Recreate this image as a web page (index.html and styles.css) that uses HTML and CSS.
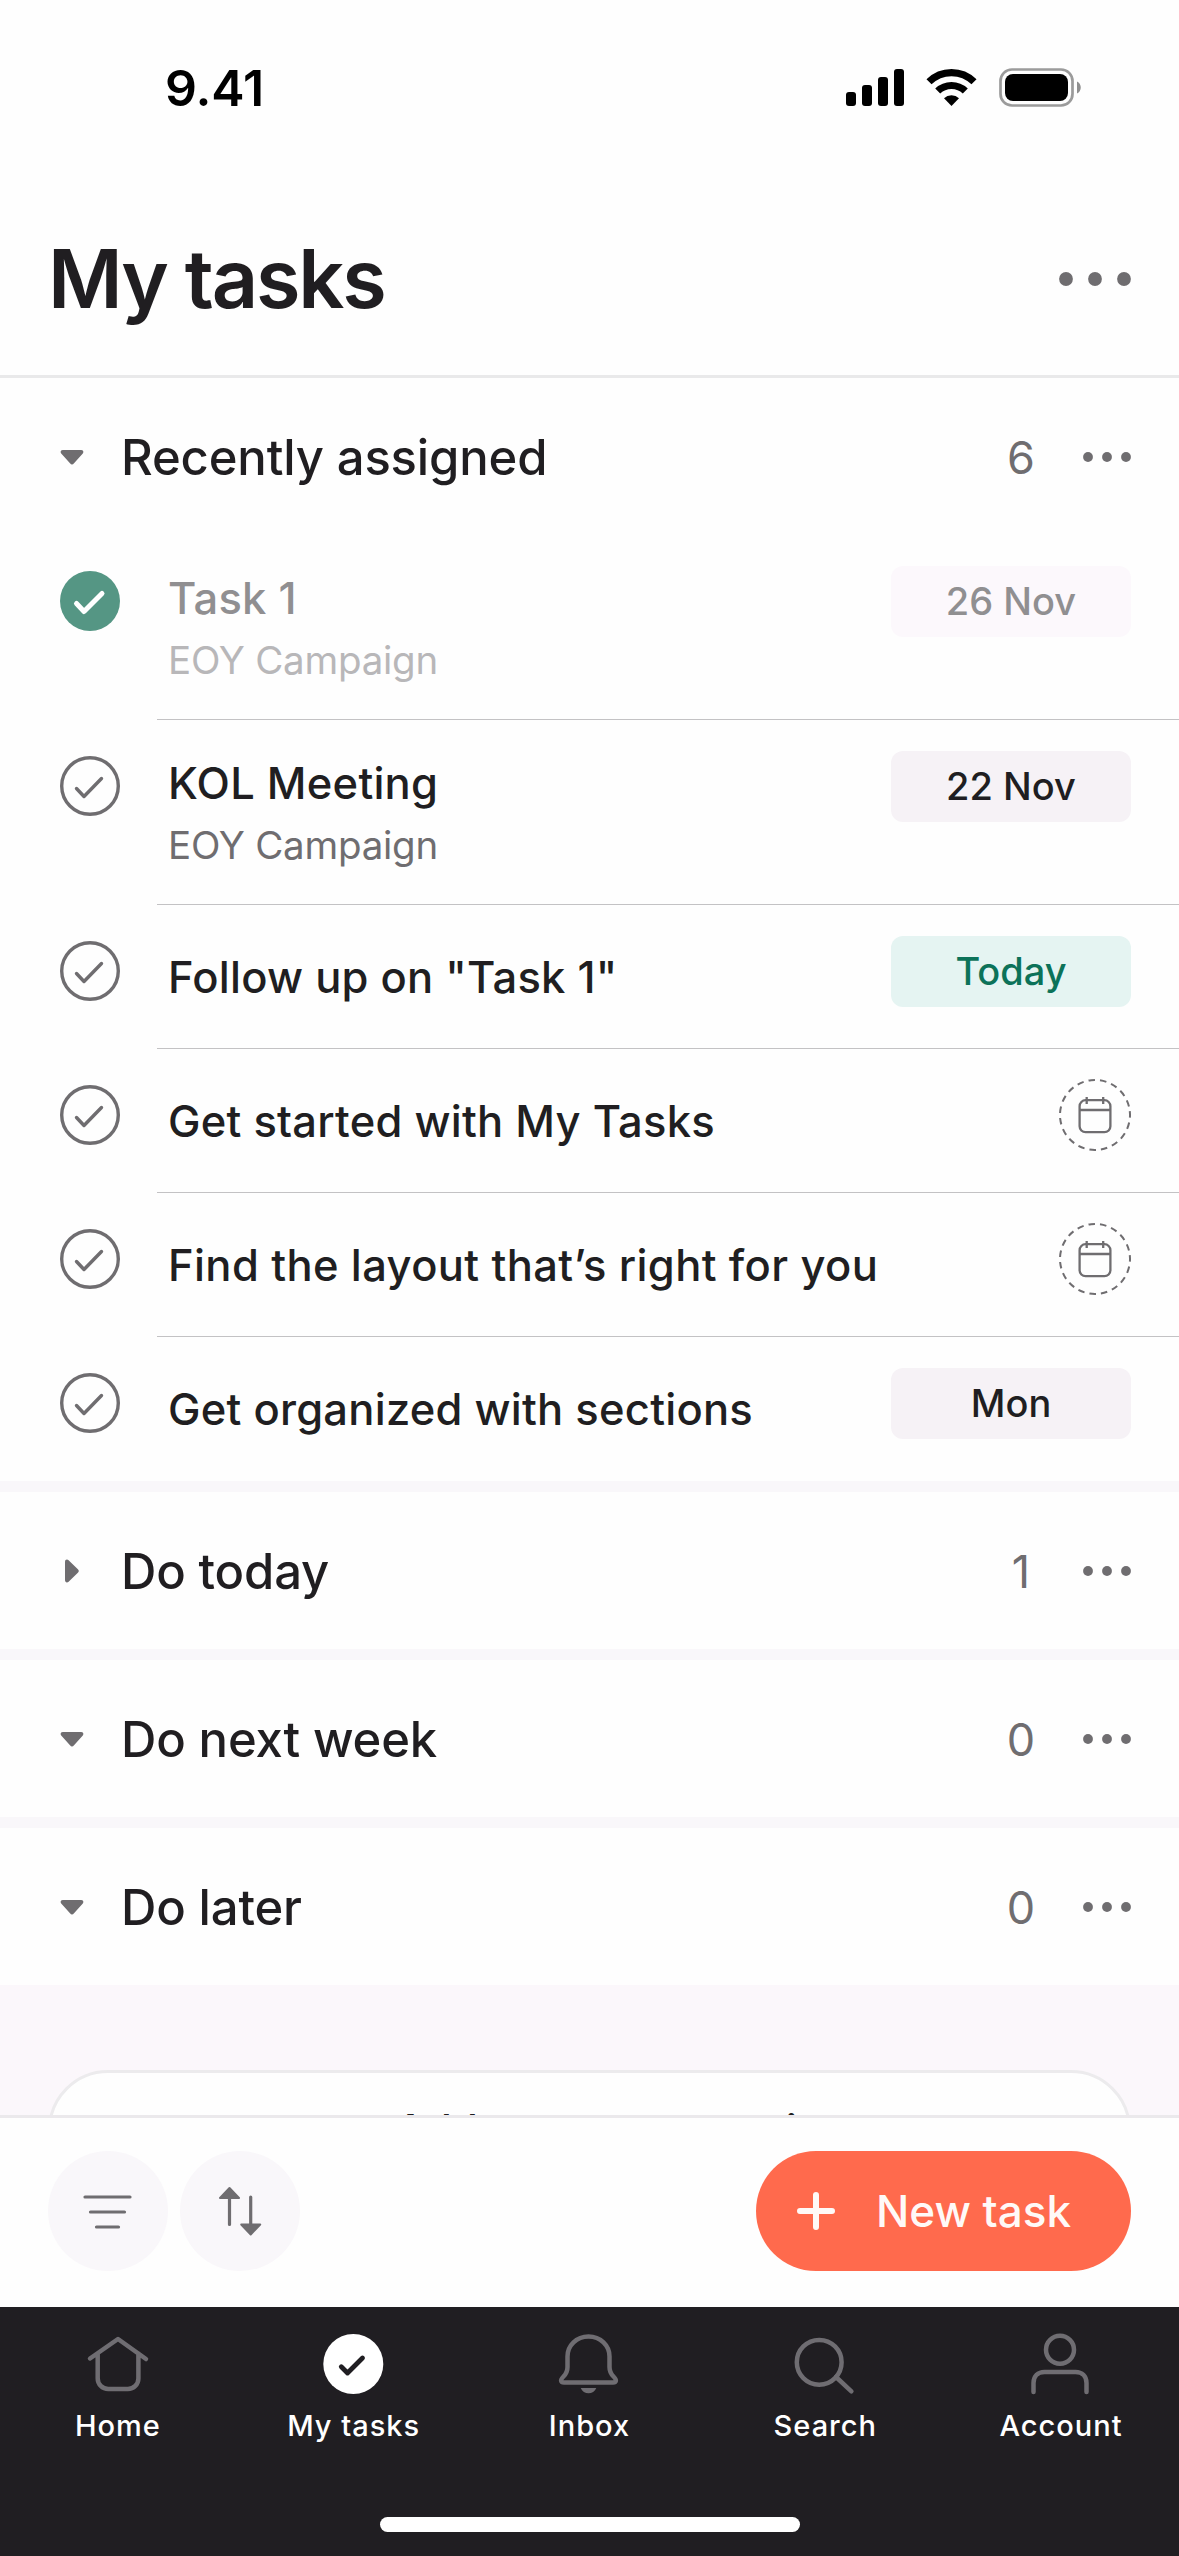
FILE: index.html
```html
<!DOCTYPE html>
<html lang="en">
<head>
<meta charset="utf-8">
<title>My tasks</title>
<link rel="stylesheet" href="styles.css">
</head>
<body>
<svg class="sprite" aria-hidden="true">
  <symbol id="check" viewBox="0 0 60 60">
    <circle cx="30" cy="30" r="28.300" fill="none" stroke="currentColor" stroke-width="3.400"/>
    <path d="M16.500 32.500 L24 40.500 L41.500 22.500" fill="none" stroke="currentColor" stroke-width="3.400" stroke-linecap="round" stroke-linejoin="round"/>
  </symbol>
  <symbol id="check-done" viewBox="0 0 60 60">
    <circle cx="30" cy="30" r="30" fill="#559684"/>
    <path d="M16.500 32.500 L24 40.500 L42 22.500" fill="none" stroke="#fff" stroke-width="5" stroke-linecap="round" stroke-linejoin="round"/>
  </symbol>
  <symbol id="dots" viewBox="0 0 48 10">
    <circle cx="5" cy="5" r="4.900"/><circle cx="24" cy="5" r="4.900"/><circle cx="43" cy="5" r="4.900"/>
  </symbol>
  <symbol id="caret-down" viewBox="0 0 24 24">
    <path d="M3 5h18c2.400 0 3 2 1.800 3.600L14 18.200c-1.300 1.600-2.700 1.600-4 0L1.200 8.600C0 7 .6 5 3 5z"/>
  </symbol>
  <symbol id="caret-right" viewBox="0 0 24 24">
    <path d="M5 3v18c0 2.400 2 3 3.600 1.800L17.600 14c1.600-1.300 1.600-2.700 0-4L8.600 1.200C7 0 5 .6 5 3z"/>
  </symbol>
  <symbol id="calendar" viewBox="0 0 72 72">
    <circle cx="36" cy="36" r="35" fill="none" stroke="currentColor" stroke-width="2" stroke-dasharray="6.540 5.034" transform="rotate(-6.400 36 36)"/>
    <g fill="none" stroke="currentColor" stroke-width="2.300">
      <rect x="20.600" y="21.200" width="30.800" height="32" rx="6"/>
      <path d="M20.600 31h30.800M27.700 18v7M44.200 18v7"/>
    </g>
  </symbol>
</svg>

<div class="screen">
  <div class="status">
    <span class="status-time">9.41</span>
    <svg class="status-icons" width="236" height="40" viewBox="0 0 236 40">
      <rect x="0" y="24" width="10" height="14" rx="3"/>
      <rect x="16" y="17" width="10" height="21" rx="3"/>
      <rect x="32" y="9" width="10" height="29" rx="3"/>
      <rect x="48" y="1" width="10" height="37" rx="3"/>
      <g fill="none" stroke="#000" stroke-width="7.200">
        <path d="M83 13.800 A32 32 0 0 1 128 13.800"/>
        <path d="M91.700 23 A20 20 0 0 1 119.300 23"/>
      </g>
      <path d="M98 30.300 A11 11 0 0 1 113 30.300 L105.500 38z"/>
      <rect x="154.500" y="1.500" width="72" height="36" rx="11.500" fill="none" stroke="#9b9b9b" stroke-width="2.700"/>
      <rect x="159" y="6" width="63" height="27" rx="8"/>
      <path d="M231 13.500c5 2 5 10 0 12z" fill="#8f8f8f"/>
    </svg>
  </div>

  <header class="header">
    <h1 class="title">My tasks</h1>
    <svg class="header-menu" width="72" height="14" viewBox="0 0 72 14"><circle cx="7" cy="7" r="6.900"/><circle cx="36" cy="7" r="6.900"/><circle cx="65" cy="7" r="6.900"/></svg>
  </header>

  <main class="list">
    <section class="section">
      <div class="section-head">
        <svg class="caret"><use href="#caret-down"/></svg>
        <h2 class="section-name">Recently assigned</h2>
        <span class="section-count">6</span>
        <svg class="section-menu"><use href="#dots"/></svg>
      </div>
      <div class="task task-tall task-done">
        <svg class="task-check"><use href="#check-done"/></svg>
        <div class="task-text"><div class="task-name">Task 1</div><div class="task-project">EOY Campaign</div></div>
        <span class="due">26 Nov</span>
      </div>
      <div class="task task-tall">
        <svg class="task-check"><use href="#check"/></svg>
        <div class="task-text"><div class="task-name">KOL Meeting</div><div class="task-project">EOY Campaign</div></div>
        <span class="due">22 Nov</span>
      </div>
      <div class="task">
        <svg class="task-check"><use href="#check"/></svg>
        <div class="task-text"><div class="task-name">Follow up on "Task 1"</div></div>
        <span class="due due-today">Today</span>
      </div>
      <div class="task">
        <svg class="task-check"><use href="#check"/></svg>
        <div class="task-text"><div class="task-name">Get started with My Tasks</div></div>
        <svg class="due-empty"><use href="#calendar"/></svg>
      </div>
      <div class="task">
        <svg class="task-check"><use href="#check"/></svg>
        <div class="task-text"><div class="task-name task-name-wide">Find the layout that’s right for you</div></div>
        <svg class="due-empty"><use href="#calendar"/></svg>
      </div>
      <div class="task">
        <svg class="task-check"><use href="#check"/></svg>
        <div class="task-text"><div class="task-name">Get organized with sections</div></div>
        <span class="due">Mon</span>
      </div>
    </section>
    <section class="section">
      <div class="section-head">
        <svg class="caret"><use href="#caret-right"/></svg>
        <h2 class="section-name">Do today</h2>
        <span class="section-count">1</span>
        <svg class="section-menu"><use href="#dots"/></svg>
      </div>
    </section>
    <section class="section">
      <div class="section-head">
        <svg class="caret"><use href="#caret-down"/></svg>
        <h2 class="section-name">Do next week</h2>
        <span class="section-count">0</span>
        <svg class="section-menu"><use href="#dots"/></svg>
      </div>
    </section>
    <section class="section">
      <div class="section-head">
        <svg class="caret"><use href="#caret-down"/></svg>
        <h2 class="section-name">Do later</h2>
        <span class="section-count">0</span>
        <svg class="section-menu"><use href="#dots"/></svg>
      </div>
    </section>
    <div class="list-end">
      <div class="manage">
        <svg width="38" height="38" viewBox="0 0 38 38"><path d="M19 7v24M7 19h24" stroke="currentColor" stroke-width="4" stroke-linecap="round"/></svg>
        <span>Add or manage sections</span>
      </div>
    </div>
  </main>

  <div class="toolbar">
    <div class="round">
      <svg width="60" height="60" viewBox="0 0 60 60"><path d="M7 16h45M12.500 31h34M18.500 46h22" stroke="currentColor" stroke-width="3.200" stroke-linecap="round"/></svg>
    </div>
    <div class="round">
      <svg width="60" height="60" viewBox="0 0 60 60">
        <g fill="none" stroke="currentColor" stroke-width="3.200" stroke-linecap="round"><path d="M19.500 12v31.500M40.700 16v31"/></g>
        <g fill="currentColor" stroke="currentColor" stroke-width="2" stroke-linejoin="round"><path d="M10 17L19.500 7 29 17zM31.200 43.500L40.700 53.500 50.200 43.500z"/></g>
      </svg>
    </div>
    <div class="new-task">
      <svg width="38" height="38" viewBox="0 0 38 38"><path d="M19 3v32M3 19h32" stroke="currentColor" stroke-width="6" stroke-linecap="round"/></svg>
      <span>New task</span>
    </div>
  </div>

  <nav class="nav">
    <div class="tabs">
      <div class="tab">
        <svg class="tab-icon" viewBox="0 0 66 66"><path d="M5 27.500L33 8l28 20M12.700 22.500V47.500a10.500 10.500 0 0 0 10.500 10.500h19.700a10.500 10.500 0 0 0 10.500-10.500V22.500"/></svg>
        <span>Home</span>
      </div>
      <div class="tab">
        <svg class="tab-icon" viewBox="0 0 66 66"><circle class="tab-disc" cx="32.300" cy="33" r="30"/><path class="tab-tick" d="M20.300 35.800l6.200 6.200L41.500 27"/></svg>
        <span>My tasks</span>
      </div>
      <div class="tab">
        <svg class="tab-icon" viewBox="0 0 66 66"><path d="M32.500 5.500c-12 0-21 9-21 20V36c0 4.500-1 6.500-4 9.500-3.500 3.500-3 6 .5 6h49c3.500 0 4-2.500.5-6-3-3-4-5-4-9.500V25.500c0-11-9-20-21-20z"/><path class="tab-solid" d="M24.700 57h15.600c-2.500 7-13 7-15.600 0z"/></svg>
        <span>Inbox</span>
      </div>
      <div class="tab">
        <svg class="tab-icon" viewBox="0 0 66 66"><circle cx="27.200" cy="31.300" r="22.400"/><path d="M44 46L59.400 60.300"/></svg>
        <span>Search</span>
      </div>
      <div class="tab">
        <svg class="tab-icon" viewBox="0 0 66 66"><circle cx="32" cy="18.800" r="14"/><path d="M5.500 61V52c0-7 4.500-11 11-11h31c6.500 0 11 4 11 11v9"/></svg>
        <span>Account</span>
      </div>
    </div>
    <div class="home-indicator"></div>
  </nav>
</div>
</body>
</html>
```
FILE: styles.css
```css
* { box-sizing: border-box; }

body {
  margin: 0;
  background: #fefefe;
  color: #201e21;
  font-family: Inter, "Liberation Sans", sans-serif;
}

.sprite { position: absolute; width: 0; height: 0; }

.screen {
  display: flex;
  flex-direction: column;
  width: 1179px;
  height: 2556px;
  overflow: hidden;
}

svg { flex: none; display: block; }

/* Status bar */
.status {
  display: flex;
  justify-content: space-between;
  align-items: center;
  height: 176px;
  padding: 0 97px 0 165px;
}
.status-time { font-size: 50px; font-weight: 600; color: #000; letter-spacing: -0.1px; }
.status-icons { fill: #000; }

/* Page header */
.header {
  display: flex;
  justify-content: space-between;
  align-items: center;
  height: 202px;
  padding: 7px 48px 0;
  border-bottom: 3px solid #e9e9ea;
}
.title { margin: 0; font-size: 81px; font-weight: 600; line-height: 96px; letter-spacing: -2.2px; }
.header-menu { fill: #6f6d70; }

/* Sections */
.list { flex: 1; min-height: 0; overflow: hidden; background: #f9f7fa; }
.section { background: #fefefe; }
.section + .section { margin-top: 11px; }
.section-head {
  display: flex;
  align-items: center;
  height: 157px;
  padding: 1px 48px 0 60px;
  color: #6f6d70;
  fill: #6f6d70;
}
.caret { width: 24px; height: 24px; }
.section-name { flex: 1; margin: 0 0 0 37px; font-size: 49px; font-weight: 500; color: #201e21; letter-spacing: -0.15px; }
.section-count { width: 60px; text-align: center; font-size: 45px; }
.section-menu { width: 48px; height: 10px; margin-left: 32px; }

/* Tasks */
.task {
  position: relative;
  display: flex;
  height: 144px;
  padding: 0 48px 0 60px;
  color: #6f6d70;
}
.task-tall { height: 185px; }
.task + .task::before {
  content: "";
  position: absolute;
  top: -1px;
  left: 157px;
  right: 0;
  height: 1px;
  background: #c3c2c4;
}
.task-check { width: 60px; height: 60px; margin-top: 36px; }
.task-text { flex: 1; align-self: center; margin-left: 48px; }
.task-name { font-size: 43.5px; font-weight: 500; line-height: 64px; color: #201e21; letter-spacing: 0.24px; white-space: nowrap; }
.task-name-wide { letter-spacing: 0.38px; }
.task-project { font-size: 38.5px; line-height: 60px; letter-spacing: -0.25px; }
.task-done .task-name { color: #908f91; }
.task-done .task-project { color: #b8b7b9; }

.due {
  width: 240px;
  height: 71px;
  margin-top: 31px;
  border-radius: 12px;
  background: #f6f2f6;
  color: #201e21;
  font-size: 38px;
  font-weight: 500;
  line-height: 71px;
  text-align: center;
}
.task-done .due { background: #fcf8fc; color: #908f91; }
.due-today { background: #e5f4f2; color: #0c7259; }
.due-empty { width: 72px; height: 72px; margin-top: 30px; }

.list-end { height: 400px; padding: 85px 48px 0; background: #fbf7fb; }
.manage {
  display: flex;
  justify-content: center;
  align-items: center;
  gap: 44px;
  height: 120px;
  padding-left: 3px;
  border: 3px solid #ecebed;
  border-radius: 60px;
  background: #fefefe;
  font-size: 44px;
  font-weight: 500;
  letter-spacing: -1.1px;
  word-spacing: -4px;
}

/* Bottom toolbar */
.toolbar {
  display: flex;
  align-items: center;
  gap: 12px;
  height: 192px;
  padding: 0 48px 3px;
  border-top: 3px solid #ebe9ec;
  background: #fefefe;
}
.round {
  display: flex;
  align-items: center;
  justify-content: center;
  width: 120px;
  height: 120px;
  border-radius: 50%;
  background: #f9f7fa;
  color: #6f6d70;
}
.new-task {
  display: flex;
  align-items: center;
  gap: 41px;
  width: 375px;
  height: 120px;
  margin-left: auto;
  padding-left: 41px;
  border-radius: 60px;
  background: #ff6a4d;
  color: #fff9f7;
  font-size: 44px;
  font-weight: 500;
}

/* Tab bar */
.nav {
  display: flex;
  flex-direction: column;
  align-items: center;
  height: 249px;
  background: #201e22;
}
.tabs { display: flex; width: 100%; height: 210px; }
.tab {
  flex: 1;
  display: flex;
  flex-direction: column;
  align-items: center;
  padding-top: 24px;
  color: #fff;
  font-size: 29px;
  font-weight: 500;
  line-height: 40px;
  letter-spacing: 1px;
}
.tab span { margin-top: 9px; }
.tab-icon {
  width: 66px;
  height: 66px;
  fill: none;
  stroke: #6f6d72;
  stroke-width: 4.5;
  stroke-linecap: round;
  stroke-linejoin: round;
}
.tab-disc { fill: #fff; stroke: none; }
.tab-tick { stroke: #201e22; stroke-width: 4.8; }
.tab-solid { fill: #6f6d72; stroke: none; }
.home-indicator { width: 420px; height: 15px; border-radius: 8px; background: #fff; }
```
